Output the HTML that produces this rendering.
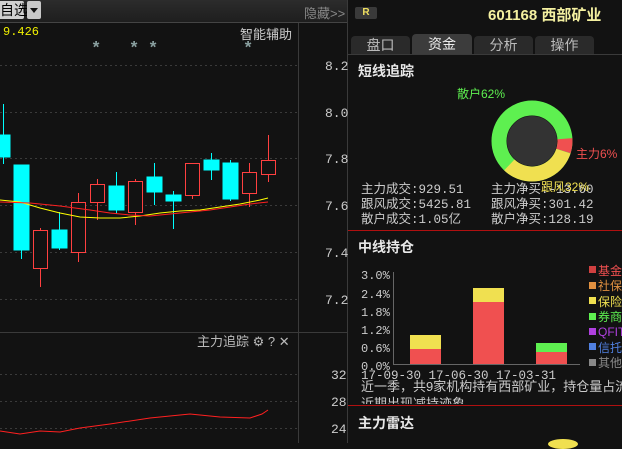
<!DOCTYPE html>
<html><head><meta charset="utf-8"><style>
body{margin:0;width:622px;height:443px;overflow:hidden;background:#121212;font-family:"Liberation Sans","Noto Sans CJK SC",sans-serif;position:relative}
.a{position:absolute;white-space:nowrap}
.m{font-family:"Liberation Mono","Noto Sans CJK SC",monospace}
</style></head><body>
<div class="a" style="left:0;top:0;width:348px;height:22px;background:linear-gradient(#2c2c2c,#1e1e1e);border-bottom:1px solid #444"></div>
<div class="a" style="left:0;top:1px;width:24px;height:18px;background:#d0d0d0;color:#000;font-size:14px;line-height:18px;border-radius:0 2px 2px 0">自选</div>
<div class="a" style="left:27px;top:1px;width:14px;height:18px;background:#c8c8c8;border-radius:2px"><div style="margin:7px 0 0 3px;width:0;height:0;border-left:4px solid transparent;border-right:4px solid transparent;border-top:5px solid #111"></div></div>
<div class="a" style="left:304px;top:3px;color:#888;font-size:13px">隐藏>></div>
<div class="a m" style="left:3px;top:25px;color:#f0f000;font-size:12px">9.426</div>
<div class="a" style="left:240px;top:24px;color:#ccc;font-size:13px">智能辅助</div>
<div class="a" style="left:197px;top:331px;color:#bbb;font-size:13px">主力追踪 ⚙ ? ✕</div>
<svg class="a" style="left:0;top:0" width="348" height="443">
<g fill="#8aa0a0" font-size="17" font-family="Liberation Mono" font-weight="bold"><text x="91" y="53">*</text><text x="129" y="53">*</text><text x="148" y="53">*</text><text x="243" y="53">*</text></g>
<g stroke="#3a3a3a" stroke-dasharray="2,3"><line x1="0" y1="65.5" x2="297" y2="65.5"/><line x1="0" y1="112.5" x2="297" y2="112.5"/><line x1="0" y1="158.5" x2="297" y2="158.5"/><line x1="0" y1="205.5" x2="297" y2="205.5"/><line x1="0" y1="252.5" x2="297" y2="252.5"/><line x1="0" y1="299.5" x2="297" y2="299.5"/><line x1="0" y1="374.5" x2="297" y2="374.5"/><line x1="0" y1="401.5" x2="297" y2="401.5"/><line x1="0" y1="428.5" x2="297" y2="428.5"/></g>
<line x1="298.5" y1="23" x2="298.5" y2="443" stroke="#3a3a3a"/>
<line x1="0" y1="332.5" x2="348" y2="332.5" stroke="#3a3a3a"/>
<line x1="347.5" y1="0" x2="347.5" y2="443" stroke="#3a3a3a"/>
<g fill="#ccc" font-size="13" font-family="Liberation Mono"><text x="325" y="70">8.2</text><text x="325" y="117">8.0</text><text x="325" y="163">7.8</text><text x="325" y="210">7.6</text><text x="325" y="257">7.4</text><text x="325" y="304">7.2</text><text x="331" y="379">32</text><text x="331" y="406">28</text><text x="331" y="433">24</text></g>
<g stroke="#00ffff" fill="#00ffff">
<line x1="3.5" y1="104" x2="3.5" y2="164"/><rect x="0" y="135" width="10" height="22"/>
<line x1="21.5" y1="165" x2="21.5" y2="259"/><rect x="14" y="165" width="15" height="85"/>
<line x1="59.5" y1="212" x2="59.5" y2="250"/><rect x="52" y="230" width="15" height="18"/>
<line x1="116.5" y1="172" x2="116.5" y2="214"/><rect x="109" y="186" width="15" height="24"/>
<line x1="154.5" y1="163" x2="154.5" y2="205"/><rect x="147" y="177" width="15" height="15"/>
<line x1="173.5" y1="191" x2="173.5" y2="229"/><rect x="166" y="195" width="15" height="6"/>
<line x1="211.5" y1="153" x2="211.5" y2="180"/><rect x="204" y="160" width="15" height="10"/>
<line x1="230.5" y1="160" x2="230.5" y2="201"/><rect x="223" y="163" width="15" height="36"/>
</g>
<g stroke="#ff4040" fill="#121212">
<line x1="40.5" y1="228" x2="40.5" y2="287"/><rect x="33.5" y="230.5" width="14" height="38"/>
<line x1="78.5" y1="193" x2="78.5" y2="262"/><rect x="71.5" y="202.5" width="14" height="50"/>
<line x1="97.5" y1="179" x2="97.5" y2="220"/><rect x="90.5" y="184.5" width="14" height="18"/>
<line x1="135.5" y1="179" x2="135.5" y2="225"/><rect x="128.5" y="181.5" width="14" height="31"/>
<line x1="192.5" y1="163" x2="192.5" y2="199"/><rect x="185.5" y="163.5" width="14" height="32"/>
<line x1="249.5" y1="163" x2="249.5" y2="207"/><rect x="242.5" y="172.5" width="14" height="21"/>
<line x1="268.5" y1="135" x2="268.5" y2="182"/><rect x="261.5" y="160.5" width="14" height="14"/>
</g>
<polyline fill="none" stroke="#ffff00" points="0,200 20,202 40,208 60,213 80,217 100,218 120,218 140,216 160,213 180,211 200,210 220,207 240,204 260,200 268,198"/>
<polyline fill="none" stroke="#ff2020" points="0,202 30,203 60,206 90,210 110,213 130,215 150,216 170,214 190,212 210,210 230,207 250,204 268,202"/>
<polyline fill="none" stroke="#ff2020" points="0,431 20,434 40,431 60,432 80,428 110,424 150,418 190,414 220,417 250,418 262,414 268,410"/>
</svg>
<div class="a" style="left:355px;top:7px;width:22px;height:12px;background:#3a3a3a;border-radius:2px;color:#f0e060;font-size:10px;font-weight:bold;text-align:center;line-height:12px">R</div>
<div class="a" style="left:488px;top:4px;color:#f4f0a0;font-size:15px;font-weight:bold">601168 西部矿业</div>
<div class="a" style="left:351px;top:36px;width:59px;height:18px;background:#2a2a2a;border-radius:4px 4px 0 0;color:#bbb;font-size:14px;text-align:center;line-height:18px">盘口</div>
<div class="a" style="left:412px;top:34px;width:60px;height:20px;background:#3c3c3c;border-radius:4px 4px 0 0;color:#eee;font-size:14px;text-align:center;line-height:21px">资金</div>
<div class="a" style="left:474px;top:36px;width:59px;height:18px;background:#2a2a2a;border-radius:4px 4px 0 0;color:#bbb;font-size:14px;text-align:center;line-height:18px">分析</div>
<div class="a" style="left:535px;top:36px;width:59px;height:18px;background:#2a2a2a;border-radius:4px 4px 0 0;color:#bbb;font-size:14px;text-align:center;line-height:18px">操作</div>
<div class="a" style="left:348px;top:54px;width:274px;height:1px;background:#3a3a3a"></div>
<div class="a" style="left:358px;top:61px;color:#e8e8e8;font-size:14px;font-weight:bold">短线追踪</div>
<div class="a" style="left:457px;top:85px;color:#5ef050;font-size:12px">散户62%</div>
<svg class="a" style="left:490px;top:99px" width="84" height="84">
<circle cx="42" cy="42" r="33" fill="none" stroke="#5ef050" stroke-width="15"/>
<circle cx="42" cy="42" r="33" fill="none" stroke="#f0e050" stroke-width="15" stroke-dasharray="66.4 207.3" transform="rotate(18 42 42)" />
<circle cx="42" cy="42" r="33" fill="none" stroke="#f05050" stroke-width="15" stroke-dasharray="12.4 207.3" transform="rotate(-4 42 42)"/>
<circle cx="42" cy="42" r="25" fill="#333"/>
</svg>
<div class="a" style="left:576px;top:145px;color:#f05050;font-size:12px">主力6%</div>
<div class="a m" style="left:361px;top:183px;color:#ccc;font-size:12.5px;line-height:15px">主力成交:929.51<br>跟风成交:5425.81<br>散户成交:1.05亿</div>
<div class="a m" style="left:491px;top:183px;color:#ccc;font-size:12.5px;line-height:15px">主力净买:-13.60<br>跟风净买:301.42<br>散户净买:128.19</div>
<div class="a" style="left:541px;top:178px;color:#f0e050;font-size:12px">跟风32%</div>
<div class="a" style="left:348px;top:230px;width:274px;height:1px;background:#b01010"></div>
<div class="a" style="left:358px;top:237px;color:#e8e8e8;font-size:14px;font-weight:bold">中线持仓</div>
<svg class="a" style="left:348px;top:260px" width="274" height="120">
<g fill="#ccc" font-size="12" font-family="Liberation Mono"><text x="13" y="19">3.0%</text><text x="13" y="38">2.4%</text><text x="13" y="56">1.8%</text><text x="13" y="74">1.2%</text><text x="13" y="92">0.6%</text><text x="13" y="110">0.0%</text></g>
<line x1="45.5" y1="12" x2="45.5" y2="104" stroke="#666"/><line x1="45" y1="104.5" x2="232" y2="104.5" stroke="#666"/>
<rect x="62" y="75" width="31" height="14" fill="#f0e050"/><rect x="62" y="89" width="31" height="15" fill="#f05050"/>
<rect x="125" y="28" width="31" height="14" fill="#f0e050"/><rect x="125" y="42" width="31" height="62" fill="#f05050"/>
<rect x="188" y="83" width="31" height="9" fill="#5ef050"/><rect x="188" y="92" width="31" height="12" fill="#f05050"/>
<g font-size="12"><rect x="241" y="6" width="7" height="7" fill="#d04040"/><text x="250" y="15" fill="#f05050">基金</text>
<rect x="241" y="22" width="7" height="7" fill="#e09040"/><text x="250" y="30" fill="#e09040">社保</text>
<rect x="241" y="37" width="7" height="7" fill="#f0e050"/><text x="250" y="46" fill="#f0e050">保险</text>
<rect x="241" y="53" width="7" height="7" fill="#5ef050"/><text x="250" y="61" fill="#5ef050">券商</text>
<rect x="241" y="68" width="7" height="7" fill="#b040e0"/><text x="250" y="76" fill="#b040e0">QFIT</text>
<rect x="241" y="83" width="7" height="7" fill="#5080e0"/><text x="250" y="92" fill="#5080e0">信托</text>
<rect x="241" y="99" width="7" height="7" fill="#888"/><text x="250" y="107" fill="#888">其他</text></g>
</svg>
<div class="a m" style="left:361px;top:369px;color:#ccc;font-size:12.5px">17-09-30 17-06-30 17-03-31</div>
<div class="a" style="left:361px;top:378px;width:261px;height:26px;overflow:hidden;color:#ccc;font-size:13px;line-height:17px">近一季，共9家机构持有西部矿业，持仓量占流<br>近期出现减持迹象</div>
<div class="a" style="left:348px;top:405px;width:274px;height:1px;background:#b01010"></div>
<div class="a" style="left:358px;top:413px;color:#e8e8e8;font-size:14px;font-weight:bold">主力雷达</div>
<div class="a" style="left:548px;top:439px;width:30px;height:10px;border-radius:50%;background:#f0e050"></div>
</body></html>
